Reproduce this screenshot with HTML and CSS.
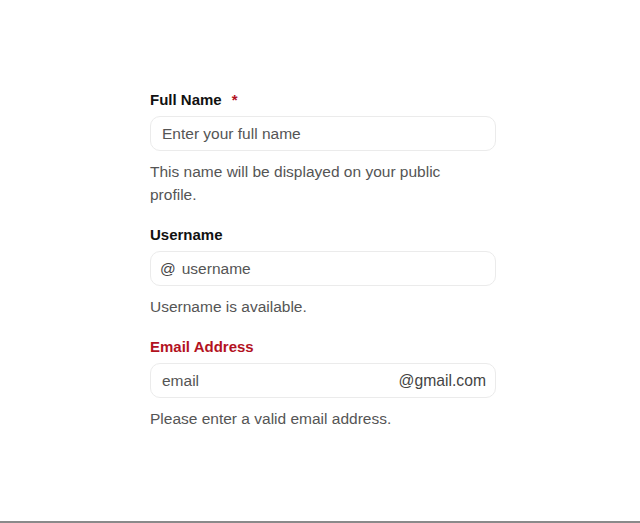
FILE: index.html
```html
<!DOCTYPE html>
<html lang="en">
<head>
<meta charset="utf-8">
<title>Profile form</title>
<link rel="stylesheet" href="styles.css">
</head>
<body>
<main class="page">
  <form class="form">
    <div class="field">
      <label class="label" for="fullname">Full Name <span class="req">*</span></label>
      <div class="input-box">
        <input class="input" id="fullname" type="text" placeholder="Enter your full name">
      </div>
      <p class="help">This name will be displayed on your public profile.</p>
    </div>
    <div class="field">
      <label class="label" for="username">Username</label>
      <div class="input-box">
        <span class="prefix">@</span>
        <input class="input" id="username" type="text" placeholder="username">
      </div>
      <p class="help">Username is available.</p>
    </div>
    <div class="field">
      <label class="label label-error" for="email">Email Address</label>
      <div class="input-box">
        <input class="input" id="email" type="text" placeholder="email">
        <span class="suffix">@gmail.com</span>
      </div>
      <p class="help">Please enter a valid email address.</p>
    </div>
  </form>
</main>
</body>
</html>
```

FILE: styles.css
```css
* { box-sizing: border-box; }
html, body { margin: 0; height: 100%; }
body {
  background: #fff;
  font-family: "Liberation Sans", Arial, sans-serif;
  color: #111;
  border-bottom: 2px solid #8a8a8a;
}
.page {
  display: flex;
  justify-content: center;
  padding: 90px 0 0 6px;
}
.form {
  width: 346px;
  display: flex;
  flex-direction: column;
  gap: 19px;
}
.field {
  display: flex;
  flex-direction: column;
}
.label {
  font-size: 15px;
  line-height: 20px;
  font-weight: 600;
  color: #111;
}
.label-error { color: #b3121f; }
.req { color: #b3121f; margin-left: 6px; }
.input-box {
  margin-top: 6px;
  height: 35px;
  border: 1px solid #ebebeb;
  border-radius: 10px;
  display: flex;
  align-items: center;
  padding: 0 9px 0 11px;
  background: #fff;
}
.input {
  flex: 1;
  min-width: 0;
  border: 0;
  outline: 0;
  padding: 0;
  font: inherit;
  font-size: 15.5px;
  background: transparent;
  color: #333;
}
.input::placeholder { color: #555; }
.prefix {
  font-size: 15.5px;
  color: #444;
  margin-right: 6px;
  margin-left: -2px;
}
.suffix {
  font-size: 15.7px;
  color: #444;
}
.help {
  margin: 9px 0 0;
  max-width: 330px;
  font-size: 15.5px;
  line-height: 23px;
  color: #555;
}
```
